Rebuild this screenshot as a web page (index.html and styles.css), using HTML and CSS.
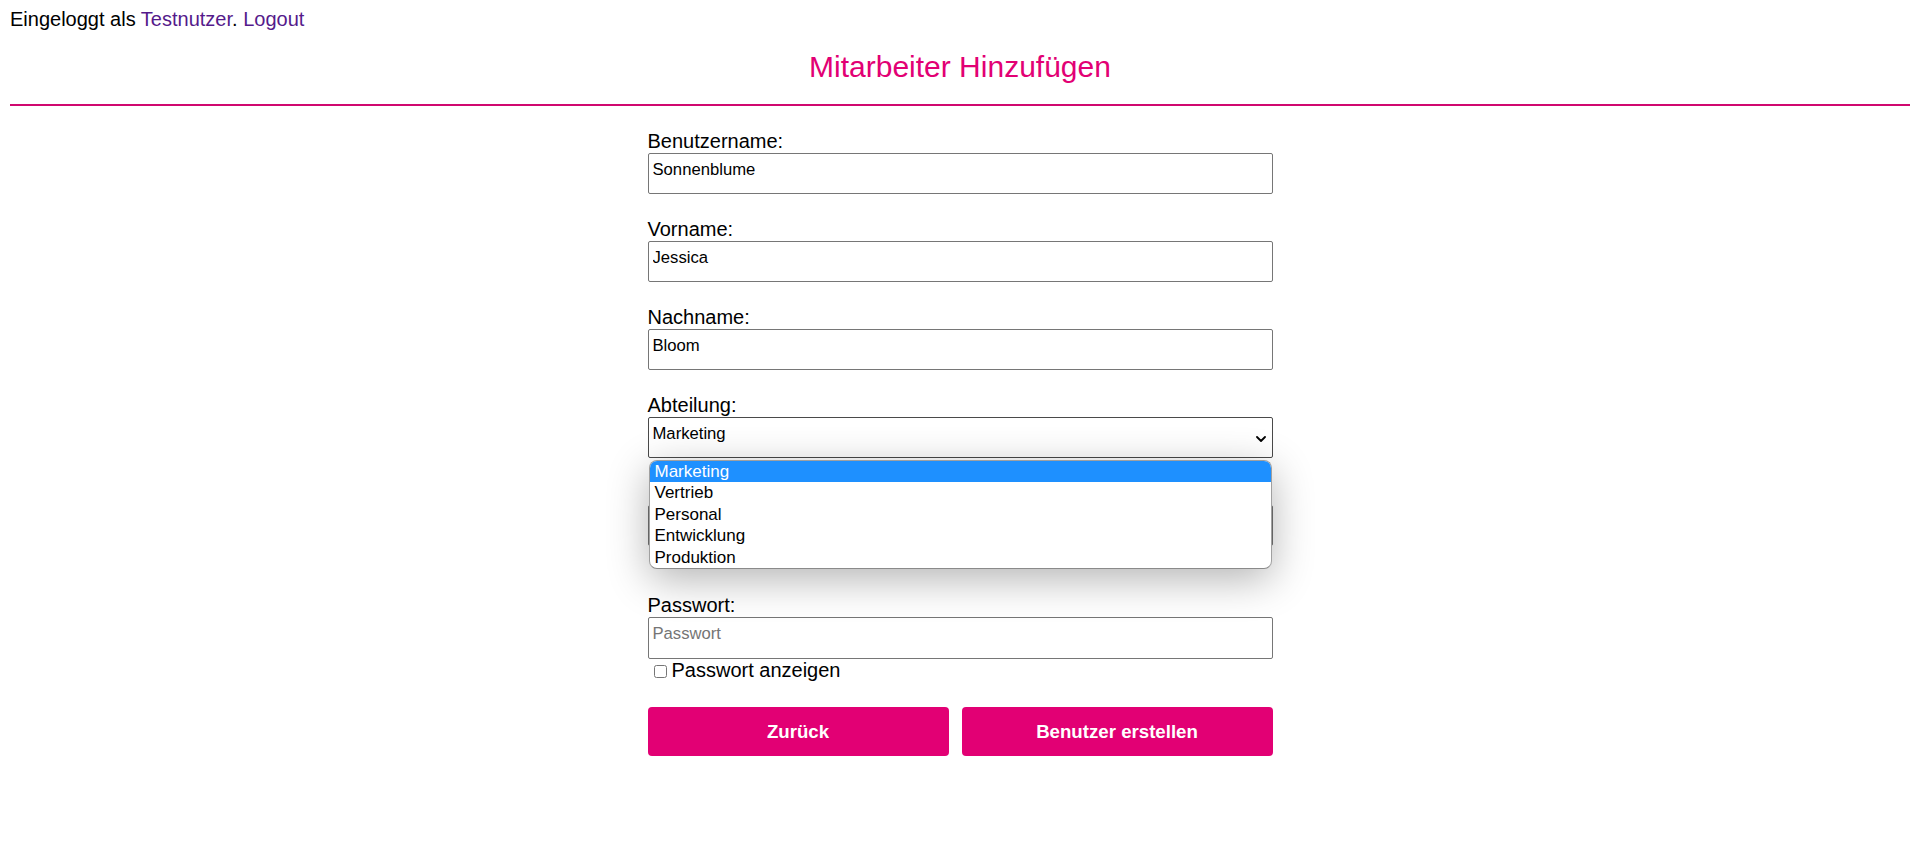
FILE: index.html
```html
<!DOCTYPE html>
<html lang="de">
<head>
<meta charset="utf-8">
<title>Mitarbeiter Hinzufügen</title>
<link rel="stylesheet" href="styles.css">
</head>
<body>
<div class="userbar">Eingeloggt als <a class="userlink" href="#">Testnutzer</a>. <a class="userlink" href="#">Logout</a></div>
<h1 class="title">Mitarbeiter Hinzufügen</h1>
<hr class="divider">
<form class="form">
  <div class="field">
    <label class="label" for="username">Benutzername:</label>
    <input class="input" id="username" type="text" value="Sonnenblume">
  </div>
  <div class="field">
    <label class="label" for="vorname">Vorname:</label>
    <input class="input" id="vorname" type="text" value="Jessica">
  </div>
  <div class="field">
    <label class="label" for="nachname">Nachname:</label>
    <input class="input" id="nachname" type="text" value="Bloom">
  </div>
  <div class="field">
    <span class="label">Abteilung:</span>
    <div class="select-wrap">
      <div class="select">
        <span class="select-value">Marketing</span>
        <svg class="chevron" width="10" height="6" viewBox="0 0 10 6" aria-hidden="true"><path d="M1 1 L5 5 L9 1" fill="none" stroke="#000" stroke-width="1.8" stroke-linecap="round" stroke-linejoin="round"/></svg>
      </div>
      <ul class="dropdown">
        <li class="option option-active">Marketing</li>
        <li class="option">Vertrieb</li>
        <li class="option">Personal</li>
        <li class="option">Entwicklung</li>
        <li class="option">Produktion</li>
      </ul>
    </div>
  </div>
  <div class="field field-spaced">
    <div class="label-spacer"></div>
    <input class="input" id="rolle" type="text" aria-label="Rolle">
  </div>
  <div class="field field-tight">
    <label class="label" for="passwort">Passwort:</label>
    <input class="input input-tall" id="passwort" type="password" placeholder="Passwort">
    <label class="show-pass"><input class="checkbox" type="checkbox">Passwort anzeigen</label>
  </div>
  <div class="actions">
    <button type="button" class="btn">Zurück</button>
    <button type="submit" class="btn">Benutzer erstellen</button>
  </div>
</form>
</body>
</html>
```

FILE: styles.css
```css
body {
  margin: 8px 10px;
  font-family: "Liberation Sans", Arial, sans-serif;
  font-size: 20px;
  color: #000;
  background: #fff;
}

.userbar {
  line-height: 23px;
}

.userlink {
  color: #551a8b;
  text-decoration: none;
}

.title {
  margin: 18.5px 0 0;
  font-size: 30px;
  font-weight: normal;
  line-height: 34.5px;
  color: #e20074;
  text-align: center;
}

.divider {
  margin: 20px 0 0;
  border: 0;
  height: 2px;
  background: #d0086f;
}

.form {
  width: 625px;
  margin: 0 auto;
  padding-top: 23px;
}

.field {
  display: flex;
  flex-direction: column;
  margin-bottom: 23px;
}

.field-spaced {
  margin-bottom: 47px;
}

.field-tight {
  margin-bottom: 0;
}

.label {
  line-height: 24px;
}

.label-spacer {
  height: 24px;
}

.input {
  height: 41px;
  box-sizing: border-box;
  margin: 0;
  padding: 6px 4px 14px;
  border: 1px solid #767676;
  border-radius: 2px;
  background: #fff;
  font-family: "Liberation Sans", Arial, sans-serif;
  font-size: 16.67px;
  line-height: 19px;
  color: #000;
}

.input-tall {
  height: 42px;
}

.input::placeholder {
  color: #757575;
}

.select-wrap {
  position: relative;
}

.select {
  height: 41px;
  box-sizing: border-box;
  display: flex;
  align-items: center;
  justify-content: space-between;
  padding: 0 6px 0 4px;
  border: 1px solid #4a4a4a;
  border-radius: 2px;
  background: #fff;
  font-size: 16.67px;
  line-height: 19px;
}

.select-value {
  padding-bottom: 8px;
}

.chevron {
  display: block;
  margin-top: 2px;
}

.dropdown {
  position: absolute;
  top: calc(100% + 2px);
  left: 1px;
  right: 1px;
  z-index: 2;
  margin: 0;
  padding: 0;
  list-style: none;
  background: #fff;
  border: 1px solid #a0a0a0;
  border-bottom-color: #8a8a8a;
  border-radius: 8px;
  overflow: hidden;
  box-shadow: 0 10px 42px rgba(0, 0, 0, 0.3);
}

.option {
  padding: 0 5px;
  font-size: 17px;
  line-height: 21.4px;
  color: #000;
}

.option-active {
  background: #1e90ff;
  color: #fff;
}

.show-pass {
  display: block;
  line-height: 23px;
}

.checkbox {
  width: 13px;
  height: 13px;
  margin: 0 5px 0 6px;
  vertical-align: -1px;
}

.actions {
  display: grid;
  grid-template-columns: 301px 1fr;
  gap: 13px;
  margin-top: 25px;
}

.btn {
  height: 49px;
  margin: 0;
  border: 0;
  border-radius: 4px;
  background: #e20074;
  color: #fff;
  font-family: "Liberation Sans", Arial, sans-serif;
  font-size: 18.67px;
  font-weight: bold;
  cursor: pointer;
}
```
